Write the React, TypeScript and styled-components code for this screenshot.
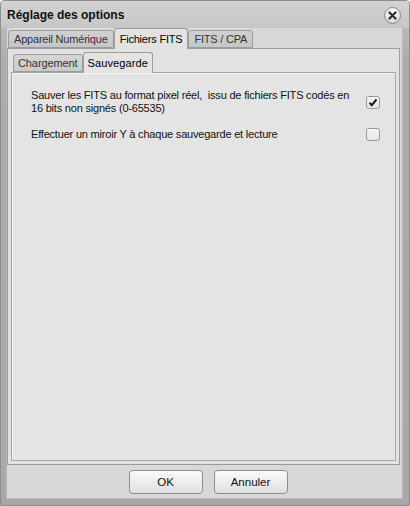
import styled, { createGlobalStyle } from 'styled-components';

const GlobalStyle = createGlobalStyle`
  html, body {
    margin: 0;
    padding: 0;
    background: #ffffff;
  }
  body {
    font-family: "Liberation Sans", Arial, sans-serif;
    font-size: 11px;
    color: #111;
  }
`;

type TabProps = { $active?: boolean };

export default function App() {
  return (
    <>
      <GlobalStyle/>
      <Window>
        <TitleBar>
          <Title>Réglage des options</Title>
          <CloseButton aria-label="Fermer">
            <svg width="9" height="9" viewBox="0 0 9 9">
              <path d="M1.5 1.5 L7.5 7.5 M7.5 1.5 L1.5 7.5" stroke="#2a2a2a" strokeWidth="2.2" strokeLinecap="round"/>
            </svg>
          </CloseButton>
        </TitleBar>
        <Body>
          <TabStrip>
            <Tab>Appareil Numérique</Tab>
            <Tab $active>Fichiers FITS</Tab>
            <Tab>FITS / CPA</Tab>
          </TabStrip>
          <TabPanel>
            <SubTabStrip>
              <SubTab>Chargement</SubTab>
              <SubTab $active>Sauvegarde</SubTab>
            </SubTabStrip>
            <SubPanel>
              <OptionRow>
                <OptionText>
                  Sauver les FITS au format pixel réel,&nbsp; issu de fichiers FITS codés en<br/>
                  16 bits non signés (0-65535)
                </OptionText>
                <CheckBox $checked>
                  <svg width="10" height="9" viewBox="0 0 10 9">
                    <path d="M1.5 4.8 L3.8 7.2 L8.5 1.5" stroke="#1a1a1a" strokeWidth="2" fill="none"/>
                  </svg>
                </CheckBox>
              </OptionRow>
              <OptionRow>
                <OptionText>Effectuer un miroir Y à chaque sauvegarde et lecture</OptionText>
                <CheckBox/>
              </OptionRow>
            </SubPanel>
          </TabPanel>
          <ButtonRow>
            <Button>OK</Button>
            <Button>Annuler</Button>
          </ButtonRow>
        </Body>
      </Window>
    </>
  );
}

const Window = styled.div`
    width: 410px;
    height: 506px;
    box-sizing: border-box;
    display: flex;
    flex-direction: column;
    background: linear-gradient(#c4c4c4, #acacac 60px, #a8a8a8);
    border: 1px solid #8e8e8e;
    border-radius: 4px 4px 0 0;
    padding: 0 6px 6px 5px;
  `,
  TitleBar = styled.div`
    height: 27px;
    flex-shrink: 0;
    display: flex;
    align-items: center;
    justify-content: space-between;
    background: linear-gradient(#d2d2d2, #c6c6c6);
    margin: 0 -6px 0 -5px;
    padding: 0 8px 0 6px;
    border-radius: 3px 3px 0 0;
  `,
  Title = styled.span`
    font-weight: bold;
    font-size: 12px;
    color: #111;
  `,
  CloseButton = styled.div`
    width: 17px;
    height: 17px;
    box-sizing: border-box;
    border-radius: 50%;
    border: 1px solid #8a8a8a;
    background: radial-gradient(circle at 50% 30%, #ffffff, #dcdcdc 70%, #c4c4c4);
    display: flex;
    align-items: center;
    justify-content: center;
    margin-top: 1px;
  `,
  Body = styled.div`
    flex: 1;
    display: flex;
    flex-direction: column;
    background: #d8d8d8;
    border: 1px solid #b8b8b8;
    border-top: none;
    padding: 0 1px 0 0;
    min-height: 0;
  `,
  TabStrip = styled.div`
    display: flex;
    align-items: flex-end;
    height: 20px;
    padding-left: 1px;
    position: relative;
    z-index: 1;
  `,
  Tab = styled.div<TabProps>`
    height: ${p => p.$active ? 21 : 18}px;
    box-sizing: border-box;
    padding: 0 5px;
    margin-bottom: ${p => p.$active ? -1 : 0}px;
    display: flex;
    align-items: center;
    font-size: 11px;
    letter-spacing: -0.2px;
    color: ${p => p.$active ? '#000' : '#333'};
    background: ${p => p.$active ? '#e2e2e2' : 'linear-gradient(#d0d0d0, #c6c6c6)'};
    border: 1px solid #9c9c9c;
    border-bottom: ${p => p.$active ? 'none' : '1px solid #9c9c9c'};
    border-radius: 3px 3px 0 0;
  `,
  TabPanel = styled.div`
    flex: 1;
    display: flex;
    flex-direction: column;
    background: #e2e2e2;
    border: 1px solid #9c9c9c;
    margin-right: 1px;
    padding: 0 3px 3px 3px;
    min-height: 0;
  `,
  SubTabStrip = styled.div`
    display: flex;
    align-items: flex-end;
    height: 23px;
    padding-left: 2px;
    position: relative;
    z-index: 1;
  `,
  SubTab = styled(Tab)`
    padding: 0 4px;
    letter-spacing: ${p => p.$active ? 0.1 : -0.1}px;
    background: ${p => p.$active ? '#e4e4e4' : 'linear-gradient(#d6d6d6, #cacaca)'};
  `,
  SubPanel = styled.div`
    flex: 1;
    background: #e4e4e4;
    border: 1px solid #a6a6a6;
    box-shadow: inset 1px 1px 0 #f2f2f2;
    padding: 16px 15px 0 19px;
    display: flex;
    flex-direction: column;
    gap: 13px;
  `,
  OptionRow = styled.div`
    display: flex;
    align-items: center;
    justify-content: space-between;
  `,
  OptionText = styled.div`
    font-size: 11px;
    line-height: 13px;
    color: #111;
    letter-spacing: -0.2px;
  `,
  CheckBox = styled.div<{ $checked?: boolean }>`
    width: 14px;
    height: 13px;
    box-sizing: border-box;
    border: 1px solid #9a9a9a;
    border-radius: 3px;
    background: linear-gradient(#f6f6f6, #e6e6e6);
    display: flex;
    align-items: center;
    justify-content: center;
    flex-shrink: 0;
  `,
  ButtonRow = styled.div`
    height: 33px;
    flex-shrink: 0;
    display: flex;
    align-items: center;
    justify-content: center;
    gap: 11px;
    padding-left: 8px;
  `,
  Button = styled.div`
    width: 74px;
    height: 24px;
    box-sizing: border-box;
    border: 1px solid #8e8e8e;
    border-radius: 4px;
    background: linear-gradient(#fbfbfb, #ececec 55%, #e0e0e0);
    display: flex;
    align-items: center;
    justify-content: center;
    font-size: 11.5px;
    color: #111;
  `;
